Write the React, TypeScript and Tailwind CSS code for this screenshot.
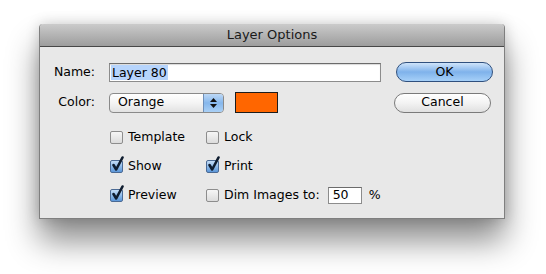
import React from "react";

const font = { fontFamily: '"DejaVu Sans", "Lucida Grande", sans-serif' };

function Check({ checked }: { checked: boolean }) {
  return (
    <div className="relative w-[13px] h-[13px] shrink-0">
      <div
        className={
          checked
            ? "w-[13px] h-[13px] rounded-[2px] border border-[#4b6a94] bg-gradient-to-b from-[#c4ddf6] via-[#8fbbea] to-[#5b96d8]"
            : "w-[13px] h-[13px] rounded-[2px] border border-[#8d8d8d] bg-gradient-to-b from-[#f6f6f6] to-[#dcdcdc]"
        }
      />
      {checked && (
        <svg className="absolute left-[1px] top-[-4px]" width="14" height="16" viewBox="0 0 14 16">
          <path d="M2.5 9 L5.2 13.5 L11.5 1.5" fill="none" stroke="#0f1d30" strokeWidth="2.6" strokeLinecap="round" strokeLinejoin="round" />
        </svg>
      )}
    </div>
  );
}

function CheckRow({ checked, label }: { checked: boolean; label: string }) {
  return (
    <div className="flex items-center gap-[5px] w-[96px]">
      <Check checked={checked} />
      <span className="leading-none text-black">{label}</span>
    </div>
  );
}

export default function App() {
  return (
    <div className="w-[546px] h-[274px] bg-white overflow-hidden pl-[39px] pt-[24px] text-[12.5px]" style={font}>
      <div className="w-[466px] h-[195px] flex flex-col rounded-t-[4px] border-x border-b border-[#7f7f7f] shadow-[0_22px_32px_rgba(0,0,0,0.45),0_0_14px_rgba(0,0,0,0.18)] bg-[#e8e8e8]">
        <div className="h-[23px] shrink-0 flex items-center justify-center rounded-t-[4px] bg-gradient-to-b from-[#cbcbcb] to-[#9d9d9d] border-b border-[#474747] text-[13px] text-[#1a1a1a]">
          Layer Options
        </div>
        <div className="flex flex-col pt-[15px]">
          <div className="flex items-center h-[20px]">
            <div className="w-[55px] text-right">Name:</div>
            <div className="ml-[14px] w-[272px] h-[19px] bg-white border border-[#8c8c8c] border-t-[#6b6b6b] shadow-[inset_0_1px_1px_rgba(0,0,0,0.15)] flex items-center pl-[1px]">
              <span className="bg-[#b6d4fc] leading-[15px] px-[1px]">Layer 80</span>
            </div>
            <button className="ml-[15px] w-[97px] h-[20px] rounded-full border border-[#30507e] bg-gradient-to-b from-[#cfe4fa] via-[#7fb2eb] to-[#a6d0f8] flex items-center justify-center text-black leading-none">
              OK
            </button>
          </div>
          <div className="flex items-center h-[21px] mt-[10px]">
            <div className="w-[55px] text-right">Color:</div>
            <div className="ml-[14px] w-[115px] h-[20px] rounded-[4px] border border-[#8a8a8a] bg-gradient-to-b from-white via-[#f4f4f4] to-[#e2e2e2] flex items-center overflow-hidden">
              <span className="flex-1 pl-[8px] leading-none">Orange</span>
              <div className="w-[20px] h-full border-l border-[#6f8fb8] bg-gradient-to-b from-[#bcd8f6] via-[#86b7ec] to-[#a9d0f6] flex flex-col items-center justify-center gap-[2px]">
                <svg width="7" height="4" viewBox="0 0 7 4"><path d="M0 4 L3.5 0 L7 4 Z" fill="#111" /></svg>
                <svg width="7" height="4" viewBox="0 0 7 4"><path d="M0 0 L3.5 4 L7 0 Z" fill="#111" /></svg>
              </div>
            </div>
            <div className="ml-[11px] w-[43px] h-[21px] bg-[#ff6600] border border-[#1c1c1c]" />
            <div className="flex-1" />
            <button className="mr-[13px] w-[97px] h-[20px] rounded-full border border-[#7a7a7a] bg-gradient-to-b from-white via-[#f3f3f3] to-[#e0e0e0] flex items-center justify-center text-black leading-none">
              Cancel
            </button>
          </div>
          <div className="flex flex-col gap-[9px] mt-[14px] pl-[70px]">
            <div className="flex items-center h-[20px]">
              <CheckRow checked={false} label="Template" />
              <CheckRow checked={false} label="Lock" />
            </div>
            <div className="flex items-center h-[20px]">
              <CheckRow checked={true} label="Show" />
              <CheckRow checked={true} label="Print" />
            </div>
            <div className="flex items-center h-[20px]">
              <CheckRow checked={true} label="Preview" />
              <div className="flex items-center gap-[5px]">
                <Check checked={false} />
                <span className="leading-none whitespace-nowrap">Dim Images to:</span>
                <div className="ml-[3px] w-[34px] h-[17px] bg-white border border-[#8c8c8c] border-t-[#6b6b6b] flex items-center pl-[4px] leading-none">
                  50
                </div>
                <span className="ml-[2px] leading-none">%</span>
              </div>
            </div>
          </div>
        </div>
      </div>
    </div>
  );
}
